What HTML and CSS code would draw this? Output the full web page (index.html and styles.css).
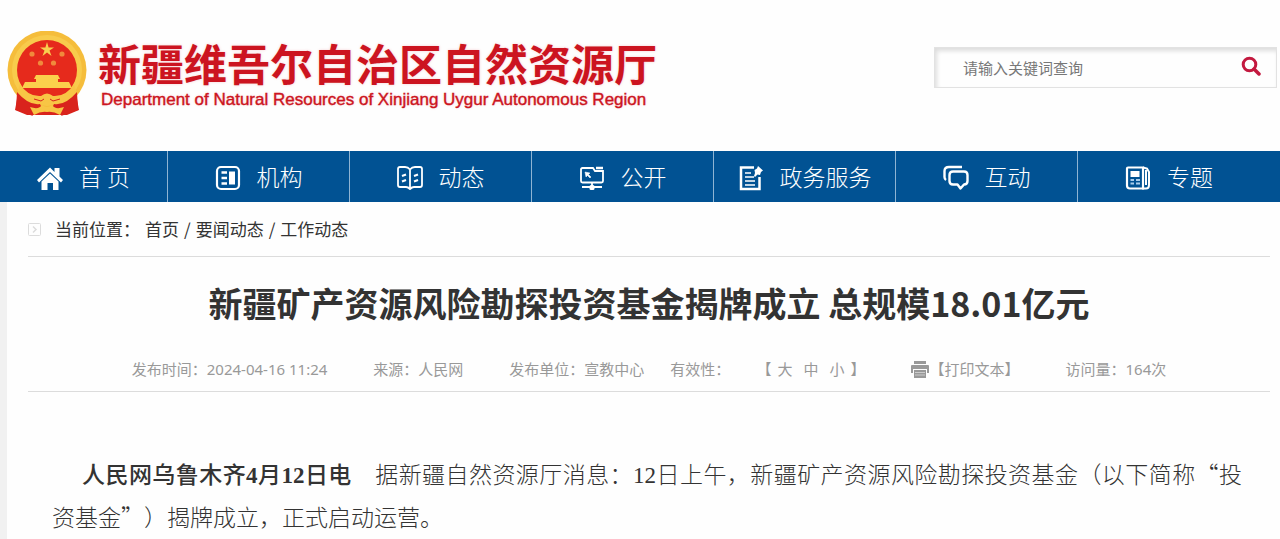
FILE: index.html
```
<!DOCTYPE html>
<html lang="zh-CN">

<head>
    <meta charset="UTF-8">
    <meta name="viewport" content="width=device-width, initial-scale=1.0">
    <title>新疆维吾尔自治区自然资源厅</title>
    <link rel="stylesheet" href="styles.css">
</head>

<body>
    <header class="header">
        <a class="logo" href="#">
            <svg class="emblem" viewBox="0 0 80 86" aria-hidden="true">
                <path d="M12 57 L8 79 L20 84 H60 L72 79 L68 57 Z" fill="#d9231c" />
                <circle cx="40" cy="39" r="39.500" fill="#f5bd3b" />
                <circle cx="40" cy="39" r="35" fill="#f8cb4c" />
                <circle cx="40" cy="39" r="30" fill="#e62a1c" />
                <path d="M40 11 L41.600 16.500 H47 L42.500 19.500 L44.500 25 L40 21.600 L35.500 25 L37.500 19.500 L33 16.500 H38.400 Z" fill="#f8d050" />
                <g fill="#f08a3c">
                    <circle cx="25" cy="23" r="2.600" />
                    <circle cx="55" cy="23" r="2.600" />
                    <circle cx="33.500" cy="32" r="2.600" />
                    <circle cx="46.500" cy="32" r="2.600" />
                </g>
                <path d="M29 44 H51 L53 48 H51 V51 H62 L65 57 H15 L18 51 H29 V48 H27 Z" fill="#fbd04c" />
                <path d="M14 57 H66 L60 63 H20 Z" fill="#e62a1c" />
                <path d="M13 53 Q21 66 34 65 Q40 60 46 65 Q59 66 67 53 L70 62 Q61 74 47 73 Q40 77 33 73 Q19 74 10 62 Z" fill="#f8c545" />
                <path d="M10 61 Q22 75 33 73 L36 79 L22 78 L26 85 L9 79 Z M70 61 Q58 75 47 73 L44 79 L58 78 L54 85 L71 79 Z" fill="#d9231c" />
                <path d="M23 76 Q32 79 35 74 Q40 78 45 74 Q48 79 57 76 L53 84 Q46 80 40 81 Q34 80 27 84 Z" fill="#f8c545" />
                <path d="M27 68 L34 70 L37 68 M53 68 L46 70 L43 68" stroke="#d9231c" fill="none" />
            </svg>
            <span class="logo-text">
                <span class="logo-cn">新疆维吾尔自治区自然资源厅</span>
                <span class="logo-en">Department of Natural Resources of Xinjiang Uygur Autonomous Region</span>
            </span>
        </a>
        <form class="search">
            <input class="search-input" type="text" placeholder="请输入关键词查询" aria-label="请输入关键词查询">
            <button class="search-btn" type="button" aria-label="查询">
                <svg viewBox="0 0 20 20" width="20" height="20">
                    <circle cx="8.500" cy="8.500" r="6.300" fill="none" stroke="#c3193f" stroke-width="3" />
                    <path d="M13 13 L18 18" stroke="#c3193f" stroke-width="3.500" stroke-linecap="round" />
                </svg>
            </button>
        </form>
    </header>

    <nav class="nav">
        <a class="nav-item" href="#">
            <svg class="icon" viewBox="0 0 26 26" fill="#fff">
                <path d="M0 15 L13 2.500 L17.500 7 V3 H22.500 V11.500 L26 15 L24 17.500 L13 7 L2 17.500 Z" />
                <path d="M4.500 16.500 L13 8.500 L21.500 16.500 V25 H16 V18 H10.500 V25 H4.500 Z" />
            </svg>
            首 页
        </a>
        <a class="nav-item" href="#">
            <svg class="icon" viewBox="0 0 26 26" fill="none" stroke="#fff">
                <rect x="2" y="2" width="22" height="22" rx="4" stroke-width="2.200" />
                <path d="M6.500 7.500 H12 M6.500 13 H12 M6.500 18.500 H12" stroke-width="2.500" />
                <rect x="14" y="6.500" width="6" height="13" fill="#fff" stroke="none" />
            </svg>
            机构
        </a>
        <a class="nav-item" href="#">
            <svg class="icon" viewBox="0 0 26 26" fill="none" stroke="#fff" stroke-width="1.800" stroke-linejoin="round">
                <path d="M13 4.500 Q11 2 8 2 H3 Q1 2 1 4 V20 Q1 22 3 22 H9 Q11 22 13 24 Q15 22 17 22 H23 Q25 22 25 20 V4 Q25 2 23 2 H18 Q15 2 13 4.500 V23" />
                <path d="M5 11 L9 9.500 M5 16.500 L9 15 M17 11 L21 9.500 M17 16.500 L21 15" stroke-width="2.200" />
            </svg>
            动态
        </a>
        <a class="nav-item" href="#">
            <svg class="icon" viewBox="0 0 26 26" fill="none" stroke="#fff" stroke-width="1.800">
                <path d="M14 3 H3.500 Q2 3 2 4.500 V16 Q2 17.500 3.500 17.500 H22.500 Q24 17.500 24 16 V6 H16 Z" />
                <path d="M17 3 H24" stroke-width="2.500" />
                <path d="M6 7 L11 8 L9.500 9.500 L12 12 L11 13 L8.500 10.500 L7 12 Z" fill="#fff" stroke="#fff" stroke-width="0.500" />
                <path d="M13 18 V22 M3 22 H23" />
                <rect x="10.500" y="20" width="5" height="5" rx="1.500" fill="#fff" stroke="none" />
            </svg>
            公开
        </a>
        <a class="nav-item" href="#">
            <svg class="icon" viewBox="0 0 26 26" fill="none" stroke="#fff">
                <path d="M16 2.500 H3 V24 H21.500 V12" stroke-width="2.500" />
                <path d="M7 8 H13 M7 12 H16 M7 16 H17 M7 20 H17" stroke-width="1.700" />
                <path d="M20 1 L25 5.500 L23 7 L22 10 L19.500 9.500 L17 12 L16 11 L17 8 L16.500 5 L19 3.500 Z" fill="#fff" stroke="none" />
            </svg>
            政务服务
        </a>
        <a class="nav-item" href="#">
            <svg class="icon" viewBox="0 0 26 26" fill="none" stroke="#fff" stroke-width="2.400" stroke-linejoin="round">
                <path d="M3 15 Q1.500 14 1.500 12 V6 Q1.500 2 6 2 H19" />
                <path d="M10 6.500 H21 Q24.500 6.500 24.500 10 V16 Q24.500 19.500 21 19.500 L17.500 23.500 L14.500 19.500 H10 Q6.500 19.500 6.500 16 V10 Q6.500 6.500 10 6.500 Z" />
            </svg>
            互动
        </a>
        <a class="nav-item" href="#">
            <svg class="icon" viewBox="0 0 26 26" fill="none" stroke="#fff">
                <path d="M3 2.500 H18 V23.500 H5 Q2 23.500 2 20.500 V3.500 Q2 2.500 3 2.500 Z" stroke-width="2.200" />
                <path d="M18 2.500 L22 3.500 L24 7 V20 Q24 23.500 21 23.500 H17 M21 5 V20" stroke-width="2" />
                <rect x="5.500" y="6" width="9" height="6" fill="#fff" stroke="none" />
                <path d="M5.500 15 H9 M5.500 18.500 H9 M11 15 H15 M11 18.500 H15" stroke="#a9cdec" stroke-width="2" />
            </svg>
            专题
        </a>
    </nav>

    <main class="main">
        <div class="crumb">
            <svg class="crumb-icon" viewBox="0 0 13 13" fill="none" stroke="#dcdcdc">
                <rect x="0.500" y="0.500" width="12" height="12" rx="1" />
                <path d="M5 3.500 L8 6.500 L5 9.500" stroke-width="1.500" />
            </svg>
            <span class="crumb-label">当前位置：</span>
            <a href="#">首页</a>
            <span>/</span>
            <a href="#">要闻动态</a>
            <span>/</span>
            <a href="#">工作动态</a>
        </div>

        <h1 class="title">新疆矿产资源风险勘探投资基金揭牌成立 总规模18.01亿元</h1>

        <div class="meta">
            <span class="meta-item">发布时间：2024-04-16 11:24</span>
            <span class="meta-item">来源：人民网</span>
            <span class="meta-item meta-near">发布单位：宣教中心</span>
            <span class="meta-item meta-near">有效性：</span>
            <span class="meta-item sizes">【<button type="button">大</button><button type="button">中</button><button type="button">小</button>】</span>
            <button class="meta-item print" type="button">
                <svg viewBox="0 0 18 18" width="18" height="18" fill="#999">
                    <path d="M3 1 H15 V4 H3 Z M1 5 H17 Q18 5 18 6 V13 H16 V9 H2 V13 H0 V6 Q0 5 1 5 Z M3 10 H15 V18 H3 Z" />
                    <path d="M4 12.500 H14 M4 15 H14" stroke="#ccc" />
                </svg>【打印文本】
            </button>
            <span class="meta-item">访问量：164次</span>
        </div>

        <article class="article">
            <p><b>人民网乌鲁木齐<span class="num">4</span>月<span class="num">12</span>日电</b>　据新疆自然资源厅消息：<span class="num">12</span>日上午，新疆矿产资源风险勘探投资基金（以下简称“投<wbr>资基金”）揭牌成立，正式启动运营。</p>
        </article>
    </main>
</body>

</html>
```
FILE: styles.css
```
* {
    box-sizing: border-box;
}

body {
    margin: 0;
    min-height: 100vh;
    display: flex;
    flex-direction: column;
    background-color: #fefefe;
    color: #333;
    font-family: "Noto Sans CJK SC", sans-serif;
    text-spacing-trim: space-all;
}

a {
    color: inherit;
    text-decoration: none;
}

button {
    padding: 0;
    border: none;
    background: none;
    color: inherit;
    font: inherit;
    cursor: pointer;
}

/* header */
.header {
    display: flex;
    justify-content: space-between;
    align-items: flex-start;
    height: 151px;
    padding: 31px 3px 0 7px;
}

.logo {
    display: flex;
    gap: 11px;
}

.emblem {
    width: 80px;
    height: 86px;
}

.logo-text {
    display: flex;
    flex-direction: column;
    padding-top: 6px;
    color: #cc1420;
    white-space: nowrap;
    text-shadow: 0 0 3px rgba(220, 20, 40, 0.2);
}

.logo-cn {
    font-size: 43px;
    line-height: 50px;
    font-weight: 700;
}

.logo-en {
    padding-left: 3px;
    font-family: "Liberation Sans", Arial, sans-serif;
    font-size: 17px;
    line-height: 26px;
    -webkit-text-stroke: 0.4px #cc1420;
}

.search {
    display: flex;
    align-items: center;
    width: 27%;
    height: 41px;
    margin-top: 16px;
    border: 1px solid #e2e2e2;
    box-shadow: inset 2px 3px 4px #ddd;
}

.search-input {
    flex: 1;
    min-width: 0;
    padding: 0 0 0 28px;
    border: none;
    outline: none;
    background: transparent;
    font-family: inherit;
    font-size: 15px;
}

.search-input::placeholder {
    color: #777;
}

.search-btn {
    display: flex;
    margin: 0 15px 4px 0;
}

/* nav */
.nav {
    display: grid;
    grid-template-columns: 168fr repeat(6, 182fr) 20fr;
    height: 51px;
    background-color: #015293;
    color: #fff;
}

.nav-item {
    display: flex;
    justify-content: center;
    align-items: center;
    gap: 16px;
    padding-bottom: 1px;
    border-right: 1px solid #8fb4d3;
    font-size: 23px;
    line-height: 34px;
    font-weight: 300;
    white-space: nowrap;
}

.nav-item:last-child {
    border-right: none;
}

.icon {
    width: 26px;
    height: 26px;
    margin-top: 4px;
}

/* content */
.main {
    flex: 1;
    padding: 0 10px 0 21px;
    border-left: 7px solid #f1f1f1;
}

.crumb {
    display: flex;
    align-items: center;
    gap: 5px;
    height: 55px;
    border-bottom: 1px solid #dcdcdc;
    font-size: 17px;
    line-height: 24px;
}

.crumb-icon {
    width: 13px;
    height: 13px;
    margin-right: 9px;
}

.title {
    margin: 0;
    padding-top: 21px;
    font-size: 34px;
    line-height: 50px;
    font-weight: 700;
    text-align: center;
}

.meta {
    display: flex;
    justify-content: center;
    align-items: center;
    gap: 46px;
    height: 64px;
    padding-top: 19px;
    border-bottom: 1px solid #dcdcdc;
    color: #999;
    font-family: "Noto Sans", "Noto Sans CJK SC", sans-serif;
    font-size: 15px;
    line-height: 22px;
    white-space: nowrap;
}

.meta-near {
    margin-right: -20px;
}

.sizes {
    display: flex;
    gap: 6px;
}

.sizes button + button {
    margin-left: 5px;
}

.print {
    display: flex;
    align-items: center;
}

.article {
    padding: 60px 28px 0 24px;
    font-size: 23px;
    line-height: 43px;
    font-weight: 300;
    text-align: justify;
}

.article p {
    margin: 0;
    text-indent: 30px;
}

.article b {
    font-weight: 500;
}

.num {
    font-family: "Liberation Serif", serif;
    line-height: 1;
}

b .num {
    font-weight: 700;
}
```
